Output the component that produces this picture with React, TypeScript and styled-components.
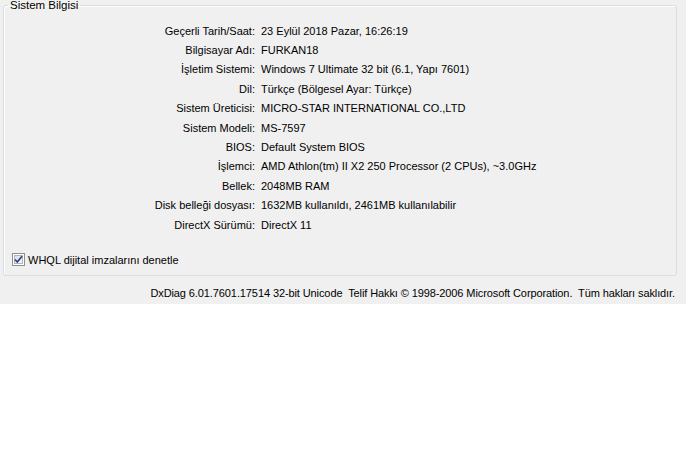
import styled, { createGlobalStyle } from "styled-components"

const Global = createGlobalStyle`
  html, body {
    margin: 0;
    padding: 0;
    background: #ffffff;
  }
  body {
    font-family: "Liberation Sans", Arial, sans-serif;
    font-size: 11px;
    color: #000;
  }
`

const Window = styled.div`
  width: 686px;
  height: 304px;
  background: #f0f0f0;
  box-sizing: border-box;
  padding: 0 9px 0 3px;
  display: flex;
  flex-direction: column;
`

const Group = styled.fieldset`
  margin: 0;
  padding: 0 0 8px 0;
  border: 1px solid #d5dfe5;
  border-radius: 3px;
  box-shadow: inset 1px 1px 0 #fff;
  height: 276px;
  box-sizing: border-box;
`

const Legend = styled.legend`
  margin-left: 4px;
  padding: 0 2px;
  line-height: 11px;
  font-size: 11.5px;
`

const InfoGrid = styled.div`
  display: grid;
  grid-template-columns: 251px 1fr;
  column-gap: 6px;
  grid-auto-rows: 19.4px;
  align-items: center;
  margin-top: 10px;
`

const Label = styled.div`
  text-align: right;
  white-space: nowrap;
`

const Value = styled.div`
  white-space: nowrap;
`

const CheckRow = styled.label`
  display: flex;
  align-items: center;
  gap: 3px;
  margin-top: 19px;
  margin-left: 8px;
`

const Footer = styled.div`
  text-align: right;
  margin-top: 11px;
  margin-right: 2px;
  white-space: pre;
  letter-spacing: -0.1px;
`

const rows: [string, string][] = [
  ["Geçerli Tarih/Saat:", "23 Eylül 2018 Pazar, 16:26:19"],
  ["Bilgisayar Adı:", "FURKAN18"],
  ["İşletim Sistemi:", "Windows 7 Ultimate 32 bit (6.1, Yapı 7601)"],
  ["Dil:", "Türkçe (Bölgesel Ayar: Türkçe)"],
  ["Sistem Üreticisi:", "MICRO-STAR INTERNATIONAL CO.,LTD"],
  ["Sistem Modeli:", "MS-7597"],
  ["BIOS:", "Default System BIOS"],
  ["İşlemci:", "AMD Athlon(tm) II X2 250 Processor (2 CPUs), ~3.0GHz"],
  ["Bellek:", "2048MB RAM"],
  ["Disk belleği dosyası:", "1632MB kullanıldı, 2461MB kullanılabilir"],
  ["DirectX Sürümü:", "DirectX 11"],
]

function CheckBox() {
  return (
    <svg width="13" height="13" viewBox="0 0 13 13">
      <defs>
        <linearGradient id="cbg" x1="0" y1="0" x2="1" y2="1">
          <stop offset="0" stopColor="#dcdcdc" />
          <stop offset="1" stopColor="#fbfbfb" />
        </linearGradient>
      </defs>
      <rect x="0.5" y="0.5" width="12" height="12" fill="#fff" stroke="#8e8f8f" />
      <rect x="2.5" y="2.5" width="8" height="8" fill="url(#cbg)" stroke="#b0b4b8" />
      <path d="M3 6.5 L5.3 9 L10 3.2" fill="none" stroke="#2a3f8f" strokeWidth="1.7" />
    </svg>
  )
}

export default function App() {
  return (
    <>
      <Global />
      <Window>
        <Group>
          <Legend>Sistem Bilgisi</Legend>
          <InfoGrid>
            {rows.flatMap(([k, v]) => [
              <Label key={k}>{k}</Label>,
              <Value key={k + "-v"}>{v}</Value>,
            ])}
          </InfoGrid>
          <CheckRow>
            <CheckBox />
            <span>WHQL dijital imzalarını denetle</span>
          </CheckRow>
        </Group>
        <Footer>DxDiag 6.01.7601.17514 32-bit Unicode  Telif Hakkı © 1998-2006 Microsoft Corporation.  Tüm hakları saklıdır.</Footer>
      </Window>
    </>
  )
}
